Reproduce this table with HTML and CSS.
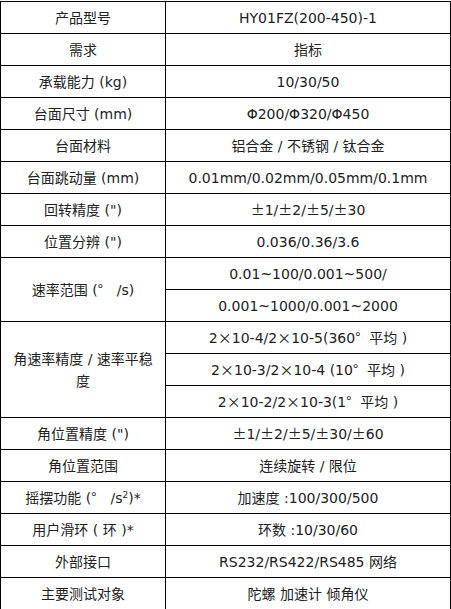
FILE: index.html
```html
<!DOCTYPE html>
<html lang="zh">
<head>
<meta charset="utf-8">
<link rel="stylesheet" href="styles.css">
</head>
<body>
<table class="spec">
  <colgroup><col class="c1"><col class="c2"></colgroup>
  <tr><td>产品型号</td><td>HY01FZ(200-450)-1</td></tr>
  <tr><td>需求</td><td>指标</td></tr>
  <tr><td>承载能力 (kg)</td><td>10/30/50</td></tr>
  <tr><td>台面尺寸 (mm)</td><td>Φ200/Φ320/Φ450</td></tr>
  <tr><td>台面材料</td><td>铝合金 / 不锈钢 / 钛合金</td></tr>
  <tr><td>台面跳动量 (mm)</td><td>0.01mm/0.02mm/0.05mm/0.1mm</td></tr>
  <tr><td>回转精度 (")</td><td><span class="cjk">±</span>1/<span class="cjk">±</span>2/<span class="cjk">±</span>5/<span class="cjk">±</span>30</td></tr>
  <tr><td>位置分辨 (")</td><td>0.036/0.36/3.6</td></tr>
  <tr><td rowspan="2">速率范围 (<span class="cjk">°</span>&emsp;/s)</td><td>0.01~100/0.001~500/</td></tr>
  <tr><td>0.001~1000/0.001~2000</td></tr>
  <tr><td rowspan="3">角速率精度 / 速率平稳度</td><td>2<span class="cjk">×</span>10-4/2<span class="cjk">×</span>10-5(360<span class="cjk">°</span>&nbsp; 平均 )</td></tr>
  <tr><td>2<span class="cjk">×</span>10-3/2<span class="cjk">×</span>10-4 (10<span class="cjk">°</span>&nbsp; 平均 )</td></tr>
  <tr><td>2<span class="cjk">×</span>10-2/2<span class="cjk">×</span>10-3(1<span class="cjk">°</span>&nbsp; 平均 )</td></tr>
  <tr><td>角位置精度 (")</td><td><span class="cjk">±</span>1/<span class="cjk">±</span>2/<span class="cjk">±</span>5/<span class="cjk">±</span>30/<span class="cjk">±</span>60</td></tr>
  <tr><td>角位置范围</td><td>连续旋转 / 限位</td></tr>
  <tr><td>摇摆功能 (<span class="cjk">°</span>&emsp;/s<sup>2</sup>)*</td><td>加速度 :100/300/500</td></tr>
  <tr><td>用户滑环 ( 环 )*</td><td>环数 :10/30/60</td></tr>
  <tr><td>外部接口</td><td>RS232/RS422/RS485 网络</td></tr>
  <tr><td>主要测试对象</td><td>陀螺 加速计 倾角仪</td></tr>
</table>
</body>
</html>
```
FILE: styles.css
```css
html, body {
  margin: 0;
  padding: 0;
  background: #fff;
}
body {
  padding-top: 1px;
}
.spec {
  border-collapse: collapse;
  width: 451px;
  table-layout: fixed;
  font-family: "DejaVu Sans", "Noto Sans CJK SC", sans-serif;
  font-size: 14px;
  color: #222;
}
.spec .c1 { width: 165px; }
.spec td {
  border: 1px solid #000;
  height: 32px;
  padding: 0 7px;
  text-align: center;
  vertical-align: middle;
  line-height: 22px;
  box-sizing: border-box;
}
.spec .cjk {
  font-family: "Noto Sans CJK SC", sans-serif;
}
.spec sup {
  font-size: 9px;
  line-height: 0;
  vertical-align: 5px;
}
```
